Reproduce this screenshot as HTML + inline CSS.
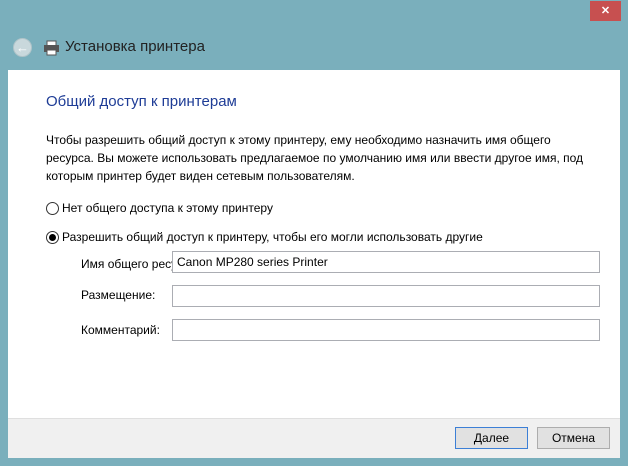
<!DOCTYPE html>
<html><head><meta charset="utf-8"><style>
*{margin:0;padding:0;box-sizing:border-box}
body{width:628px;height:466px;background:#7aafbc;position:relative;font-family:"Liberation Sans",sans-serif;font-size:12px;color:#000;overflow:hidden}
.a{position:absolute}
.close{left:590px;top:1px;width:31px;height:20px;background:#c75050;color:#fff;font-size:11px;font-weight:bold;text-align:center;line-height:20px}
.content{left:8px;top:70px;width:612px;height:348px;background:#fff}
.footer{left:8px;top:418px;width:612px;height:40px;background:#f0f0f0;border-top:1px solid #dfdfdf}
.inp{height:22px;border:1px solid #abadb3;background:#fff;left:172px;width:428px;padding-left:4px;line-height:20px;font-size:12px}
.btn{height:22px;width:73px;background:#e1e1e1;border:1px solid #adadad;text-align:center;line-height:20px;top:427px}
.radio{width:13px;height:13px;border:1px solid #333;border-radius:50%;background:#fff}
</style></head><body>
<div class="a close">✕</div>
<div class="a" style="left:13px;top:38px;width:19px;height:19px;border-radius:50%;background:#c9d8dc;border:1px solid #b0c4c9;color:#fff;font-size:13px;text-align:center;line-height:17px;font-weight:bold">←</div>
<svg class="a" style="left:43px;top:40px" width="17" height="16"><rect x="4" y="1" width="9" height="5" fill="#fff" stroke="#555"/><rect x="1" y="5" width="15" height="7" fill="#555"/><rect x="4" y="10" width="9" height="5" fill="#fff" stroke="#555"/></svg>
<div class="a" style="left:65px;top:38px;font-size:15px;color:#222">Установка принтера</div>
<div class="a content"></div>
<div class="a" style="left:46px;top:93px;font-size:15px;color:#1e3c96">Общий доступ к принтерам</div>
<div class="a" style="left:46px;top:131px;line-height:18px;width:548px">Чтобы разрешить общий доступ к этому принтеру, ему необходимо назначить имя общего<br>ресурса. Вы можете использовать предлагаемое по умолчанию имя или ввести другое имя, под<br>которым принтер будет виден сетевым пользователям.</div>
<div class="a radio" style="left:46px;top:202px"></div>
<div class="a" style="left:62px;top:201px">Нет общего доступа к этому принтеру</div>
<div class="a radio" style="left:46px;top:231px"><div style="width:7px;height:7px;border-radius:50%;background:#000;margin:2px"></div></div>
<div class="a" style="left:62px;top:230px">Разрешить общий доступ к принтеру, чтобы его могли использовать другие</div>
<div class="a" style="left:81px;top:257px;width:91px;overflow:hidden;white-space:nowrap">Имя общего ресурса:</div>
<div class="a inp" style="top:251px">Canon MP280 series Printer</div>
<div class="a" style="left:81px;top:288px">Размещение:</div>
<div class="a inp" style="top:285px"></div>
<div class="a" style="left:81px;top:323px">Комментарий:</div>
<div class="a inp" style="top:319px"></div>
<div class="a footer"></div>
<div class="a btn" style="left:455px;border-color:#3c7fd6">Далее</div>
<div class="a btn" style="left:537px">Отмена</div>
</body></html>
